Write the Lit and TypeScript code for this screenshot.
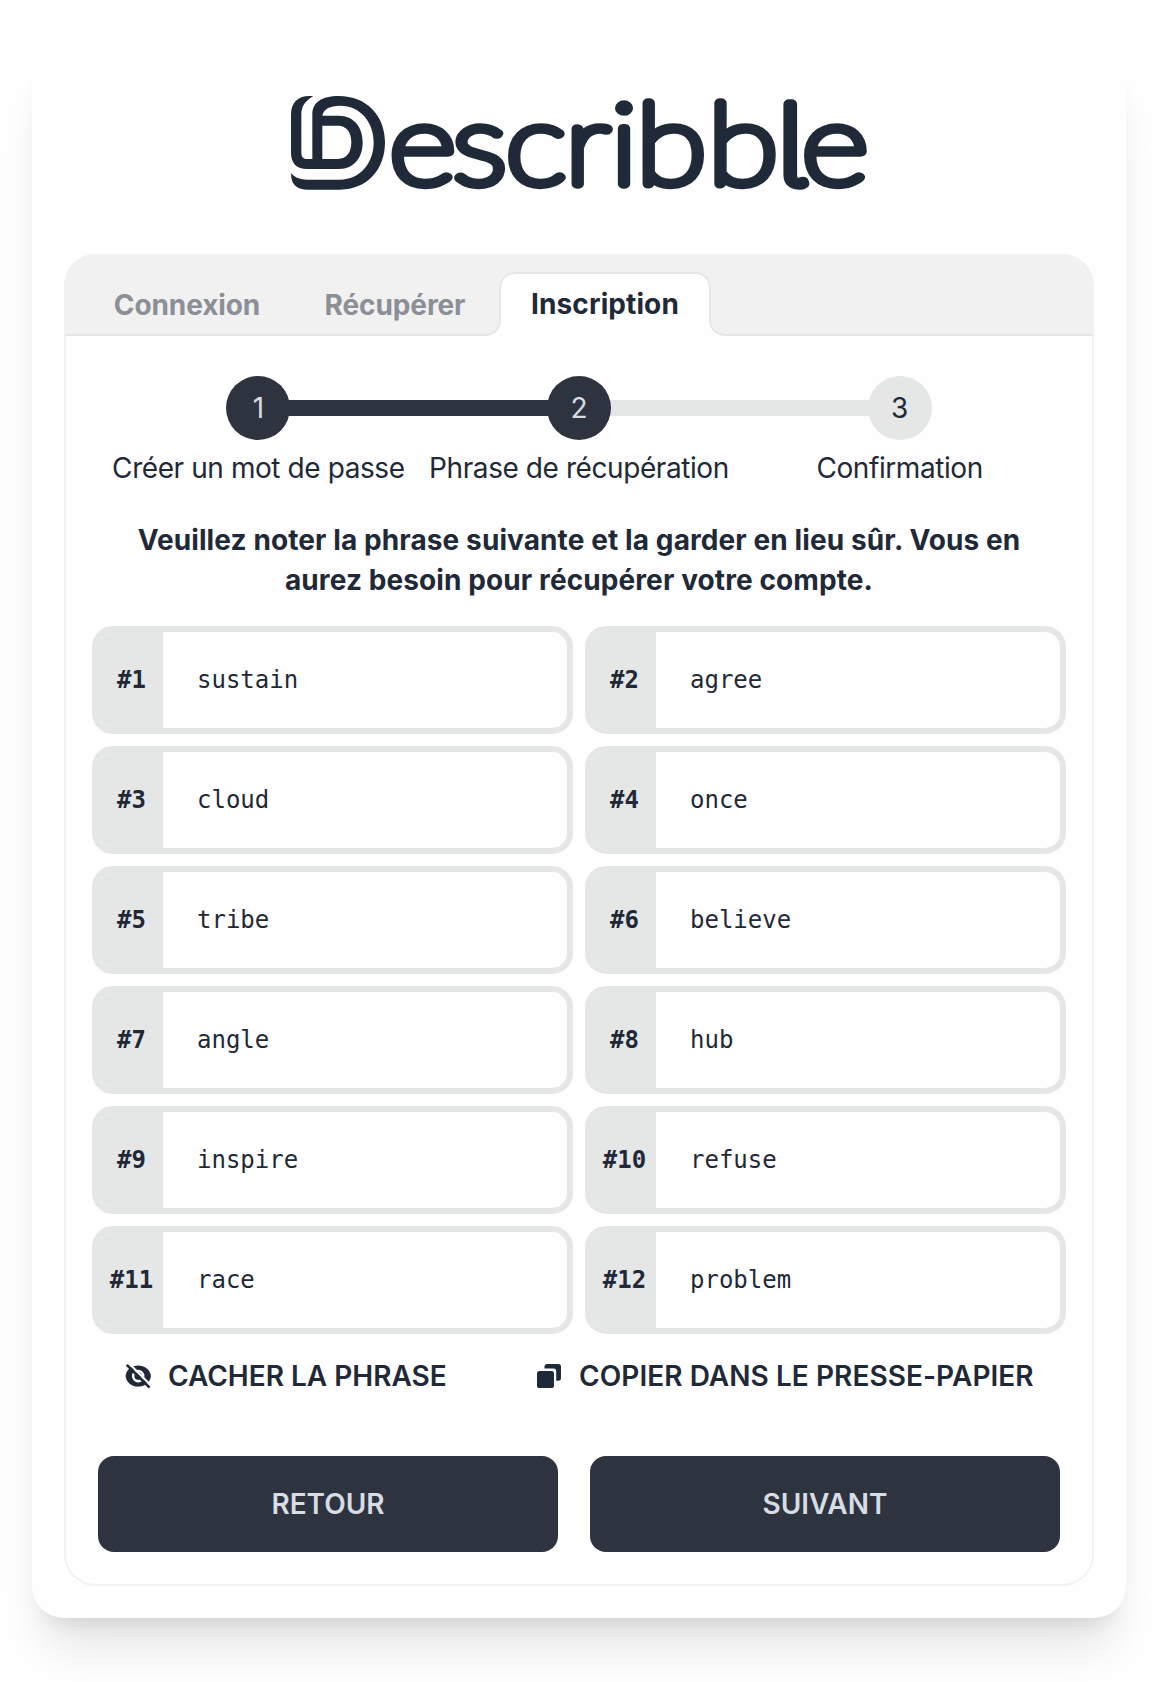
import { LitElement, html, css } from "lit";
import { customElement, property } from "lit/decorators.js";
import { classMap } from "lit/directives/class-map.js";

@customElement("brand-logo")
class BrandLogo extends LitElement {
  static styles = css`
    :host { display: block; width: 600px; height: 115px; }
    .logo { display: block; width: 600px; height: 115px; overflow: visible; }
    .mark { fill: #1f2937; }
    .word {
      font-family: Lato, sans-serif;
      font-weight: 100;
      font-size: 336px;
      fill: #1f2937;
      stroke: #1f2937;
      stroke-width: 28px;
      stroke-linejoin: round;
    }
    .tail { font-family: Inter, sans-serif; font-weight: 100; font-size: 330px; font-feature-settings: "cv05" 1, "ss02" 1; }
  `;
  render() {
    return html`<svg class="logo" viewBox="0 0 1800 345" role="img" aria-label="Describble">
      <path class="mark" fill-rule="evenodd" d="M100 33H88C52 33 33 55 33 88V203C33 235 50 252 82 252H178C222 252 248 218 248 172C248 126 222 92 176 92H127C130 72 150 62 180 62C240 62 281 110 281 172C281 235 240 284 180 284H82C60 284 45 278 33 264C33 300 50 314 85 314H180C260 314 315 255 315 172C315 92 260 33 176 33C125 33 97 52 97 88V222H82C70 222 64 216 64 203V88C64 62 78 46 100 33ZM127 122H174C200 122 214 142 214 172C214 202 200 222 174 222H127Z"/>
      <text class="word" transform="scale(1.16 1)" y="298" x="282 446 583.5 737 854.5 920.7 1106 1284 1348.5">escribb<tspan class="tail">l</tspan>e</text>
    </svg>`;
  }
}

@customElement("word-cell")
class WordCell extends LitElement {
  @property({ type: Number }) index = 0;
  @property() word = "";
  static styles = css`
    :host { display: block; }
    .cell {
      box-sizing: border-box; height: 108px; display: flex; align-items: stretch;
      border: 6px solid #e5e6e6; border-radius: 21px; overflow: hidden;
      font: 24px/34px "DejaVu Sans Mono", monospace; color: #1f2937;
    }
    .num {
      width: 65px; background: #e5e6e6; font-weight: 700; flex: none; padding-left: 2px; box-sizing: border-box;
      display: flex; align-items: center; justify-content: center;
    }
    .word { display: flex; align-items: center; padding-left: 34px; }
  `;
  render() {
    return html`<div class="cell"><div class="num">#${this.index}</div><div class="word">${this.word}</div></div>`;
  }
}

@customElement("app-root")
class AppRoot extends LitElement {
  static styles = css`
    :host {
      display: block; box-sizing: border-box; height: 1682px; padding: 48px 32px 32px; overflow: hidden;
      background: #fff; color: #1f2937; font: 28px/40px Inter, sans-serif;
    }
    .card {
      box-sizing: border-box; height: 1570px; padding: 37px 32px 0; border-radius: 32px; background: #fefefe;
      box-shadow: 0 40px 50px -10px rgba(0,0,0,.1), 0 16px 20px -12px rgba(0,0,0,.1);
    }
    .brand { height: 169px; padding-left: 216px; }
    .panel {
      box-sizing: border-box; height: 1332px; border: 2px solid #f2f2f2; border-radius: 32px;
      display: flex; flex-direction: column;
    }
    .tabs {
      display: flex; align-items: flex-end; height: 82px; box-sizing: border-box; padding-left: 19px;
      margin: -2px -2px 0; background: #f1f1f1; border-radius: 32px 32px 0 0; position: relative;
    }
    .tabs::after {
      content: ""; position: absolute; left: 2px; right: 2px; bottom: 0; height: 2px; background: #e5e6e6;
    }
    .tab {
      width: 208px; height: 64px; display: flex; align-items: center; justify-content: center;
      padding-top: 1px; box-sizing: border-box;
      font-weight: 700; letter-spacing: -0.1px; color: #8c8f96;
    }
    .tab.active { width: 212px; color: #1f2937; position: relative; z-index: 1; padding: 0 0 1px; letter-spacing: 0.1px; }
    .shape { position: absolute; left: -16px; top: 0; width: 244px; height: 64px; }
    .label { position: relative; }
    .body { padding: 40px 32px 0; display: flex; flex-direction: column; }
    .steps { display: grid; grid-template-columns: repeat(3, 1fr); }
    .step { display: flex; flex-direction: column; align-items: center; }
    .track { display: grid; grid-template-columns: 1fr 64px 1fr; align-items: center; width: 100%; height: 64px; }
    .bar { height: 16px; margin-right: -4px; }
    .bar.after { margin: 0 0 0 -4px; }
    .bar.light { background: #e5e6e6; }
    .bar.dark { background: #2d333f; }
    .dot {
      width: 64px; height: 64px; border-radius: 50%; background: #e5e6e6; z-index: 1;
      display: flex; align-items: center; justify-content: center;
    }
    .dot.done { background: #2d333f; color: #d8dce3; }
    .caption { margin-top: 8px; white-space: nowrap; letter-spacing: -0.42px; }
    .notice { margin: 32px 0 0; text-align: center; font-weight: 700; letter-spacing: 0.1px; white-space: nowrap; }
    .words { display: grid; grid-template-columns: 481px 481px; gap: 12px; margin: 26px -6px 0; }
    .actions { display: flex; height: 84px; align-items: center; font-weight: 600; white-space: nowrap; }
    .action { display: flex; align-items: center; }
    .hide { padding-left: 24px; width: 435px; box-sizing: border-box; }
    .copy { letter-spacing: 0.06px; }
    .icon { width: 32px; height: 32px; margin-right: 14px; fill: #1f2937; flex: none; }
    .buttons { display: flex; gap: 32px; margin-top: 38px; }
    .btn {
      height: 96px; border: 0; padding: 0; border-radius: 16px; background: #2d333f; color: #d8dce3;
      font: 600 28px/28px Inter, sans-serif;
    }
    .back { flex: 460 1 0; }
    .next { flex: 470 1 0; }
  `;

  private words = ["sustain", "agree", "cloud", "once", "tribe", "believe", "angle", "hub", "inspire", "refuse", "race", "problem"];
  private steps = ["Créer un mot de passe", "Phrase de récupération", "Confirmation"];

  private bar(i: number, side: string) {
    const segment = side === "after" ? i + 1 : i;
    const drawn = segment > 0 && segment < this.steps.length;
    return html`<div class=${classMap({ bar: true, after: side === "after", dark: drawn && segment === 1, light: drawn && segment === 2 })}></div>`;
  }

  render() {
    return html`
      <div class="card">
        <div class="brand"><brand-logo></brand-logo></div>
        <div class="panel">
          <div class="tabs">
            <div class="tab">Connexion</div>
            <div class="tab">Récupérer</div>
            <div class="tab active">
              <svg class="shape" viewBox="0 0 244 64">
                <path fill="#fefefe" d="M0 64Q16 64 16 47V17Q16 1 33 1H211Q227 1 227 17V47Q227 64 244 64Z"/>
                <path fill="none" stroke="#e5e6e6" stroke-width="2" d="M0 63C11 63 17 57 17 47V17C17 7 23 1 33 1H211C221 1 227 7 227 17V47C227 57 233 63 244 63"/>
              </svg>
              <span class="label">Inscription</span>
            </div>
          </div>
          <div class="body">
            <div class="steps">
              ${this.steps.map((s, i) => html`<div class="step">
                <div class="track">${this.bar(i, "before")}<div class=${classMap({ dot: true, done: i < 2 })}>${i + 1}</div>${this.bar(i, "after")}</div>
                <div class="caption">${s}</div>
              </div>`)}
            </div>
            <p class="notice">Veuillez noter la phrase suivante et la garder en lieu sûr. Vous en<br>aurez besoin pour récupérer votre compte.</p>
            <div class="words">${this.words.map((w, i) => html`<word-cell .index=${i + 1} .word=${w}></word-cell>`)}</div>
            <div class="actions">
              <div class="action hide">
                <svg class="icon" viewBox="0 0 32 32">
                  <path fill-rule="evenodd" d="M16.2 5.6C22.6 5.6 27.6 9.5 28.8 15V17C27.6 22.7 22.6 26.6 16.2 26.6C9.8 26.6 4.8 22.7 3.7 17V15C4.8 9.5 9.8 5.6 16.2 5.6ZM16.2 9.8A6.3 6.3 0 1 0 16.2 22.4A6.3 6.3 0 1 0 16.2 9.8ZM16.2 12.3A3.8 3.8 0 1 1 16.2 19.9A3.8 3.8 0 1 1 16.2 12.3Z"/>
                  <path fill="none" stroke="#fefefe" stroke-width="2.2" d="M6.8 3.3L30 26.5"/>
                  <path fill="none" stroke="#1f2937" stroke-width="2.6" d="M4.8 4.8L27.6 27.6"/>
                </svg>CACHER LA PHRASE
              </div>
              <div class="action copy">
                <svg class="icon" viewBox="0 0 32 32">
                  <rect x="4" y="11" width="17" height="17" rx="2.6"/>
                  <path d="M11.5 8.6V6.8Q11.5 4 14.3 4H25.2Q28 4 28 6.8V18Q28 20.8 25.2 20.8H23.2V11.4Q23.2 8.6 20.4 8.6Z"/>
                </svg>COPIER DANS LE PRESSE-PAPIER
              </div>
            </div>
            <div class="buttons"><button class="btn back">RETOUR</button><button class="btn next">SUIVANT</button></div>
          </div>
        </div>
      </div>`;
  }
}
